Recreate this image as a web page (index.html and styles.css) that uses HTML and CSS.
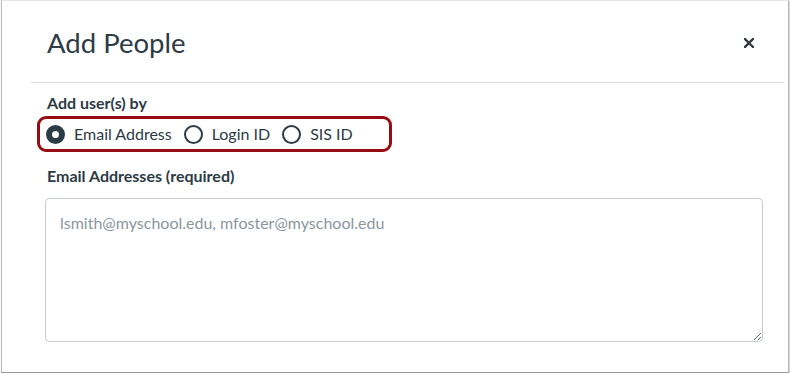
FILE: index.html
```html
<!DOCTYPE html>
<html>
<head>
<meta charset="utf-8">
<link rel="stylesheet" href="styles.css">
</head>
<body>
<div class="window">
  <div class="header">
    <h1 class="title">Add People</h1>
    <button class="close" aria-label="Close">
      <svg width="10" height="10" viewBox="0 0 10 10"><path d="M1 1L9 9M9 1L1 9" stroke="#2d3b45" stroke-width="2.4" stroke-linecap="square" fill="none"/></svg>
    </button>
  </div>
  <div class="body">
    <div class="label">Add user(s) by</div>
    <div class="radio-group">
      <label class="radio"><span class="dot checked"></span>Email Address</label>
      <label class="radio"><span class="dot"></span>Login ID</label>
      <label class="radio"><span class="dot"></span>SIS ID</label>
    </div>
    <div class="label label2">Email Addresses (required)</div>
    <textarea class="input" placeholder="lsmith@myschool.edu, mfoster@myschool.edu"></textarea>
  </div>
</div>
</body>
</html>
```
FILE: styles.css
```css
html, body {
  margin: 0;
  padding: 0;
  background: #fff;
  font-family: Lato, "Open Sans", sans-serif;
  color: #2d3b45;
}
.window {
  box-sizing: border-box;
  margin-left: 1px;
  width: 788px;
  height: 373px;
  border-top: 1px solid #e6e6e6;
  border-left: 1px solid #b8b8b8;
  border-right: 1px solid #b8b8b8;
  border-bottom: 1px solid #9a9a9a;
  box-shadow: 1px 1px 2px rgba(0,0,0,0.25);
  background: #fff;
}
.header {
  margin-left: 29px;
  margin-right: 4px;
  height: 81px;
  border-bottom: 1px solid #d9d9d9;
  display: flex;
  align-items: center;
  justify-content: space-between;
  padding-left: 16px;
  padding-right: 30px;
}
.title {
  margin: 0;
  font-size: 27.5px;
  font-weight: 400;
  line-height: 1;
  padding-top: 2px;
}
.close {
  border: 0;
  background: none;
  padding: 0;
  width: 10px;
  height: 10px;
  display: flex;
  margin-top: 3px;
}
.body {
  padding-left: 45px;
  padding-right: 23px;
  padding-top: 10px;
}
.label {
  font-size: 16px;
  font-weight: 700;
  line-height: 20px;
}
.radio-group {
  display: inline-flex;
  align-items: center;
  gap: 12px;
  margin-left: -10px;
  margin-top: 3px;
  padding: 0 36px 0 6px;
  height: 30px;
  border: 3px solid #950d12;
  border-radius: 9px;
}
.radio {
  display: flex;
  align-items: center;
  gap: 9px;
  font-size: 16px;
  line-height: 20px;
}
.dot {
  box-sizing: border-box;
  width: 19px;
  height: 19px;
  border-radius: 50%;
  border: 2px solid #2d3b45;
  background: #fff;
}
.dot.checked {
  border: 6.5px solid #2d3b45;
}
.label2 {
  margin-top: 14px;
}
.input {
  display: block;
  box-sizing: border-box;
  margin-top: 12px;
  margin-left: -2px;
  width: 718px;
  height: 144px;
  border: 1px solid #c7cdd1;
  border-radius: 4px;
  padding: 14px 14px;
  font-family: Lato, sans-serif;
  font-size: 16px;
  color: #2d3b45;
  resize: both;
}
.input::placeholder {
  color: #8b969e;
}
```
